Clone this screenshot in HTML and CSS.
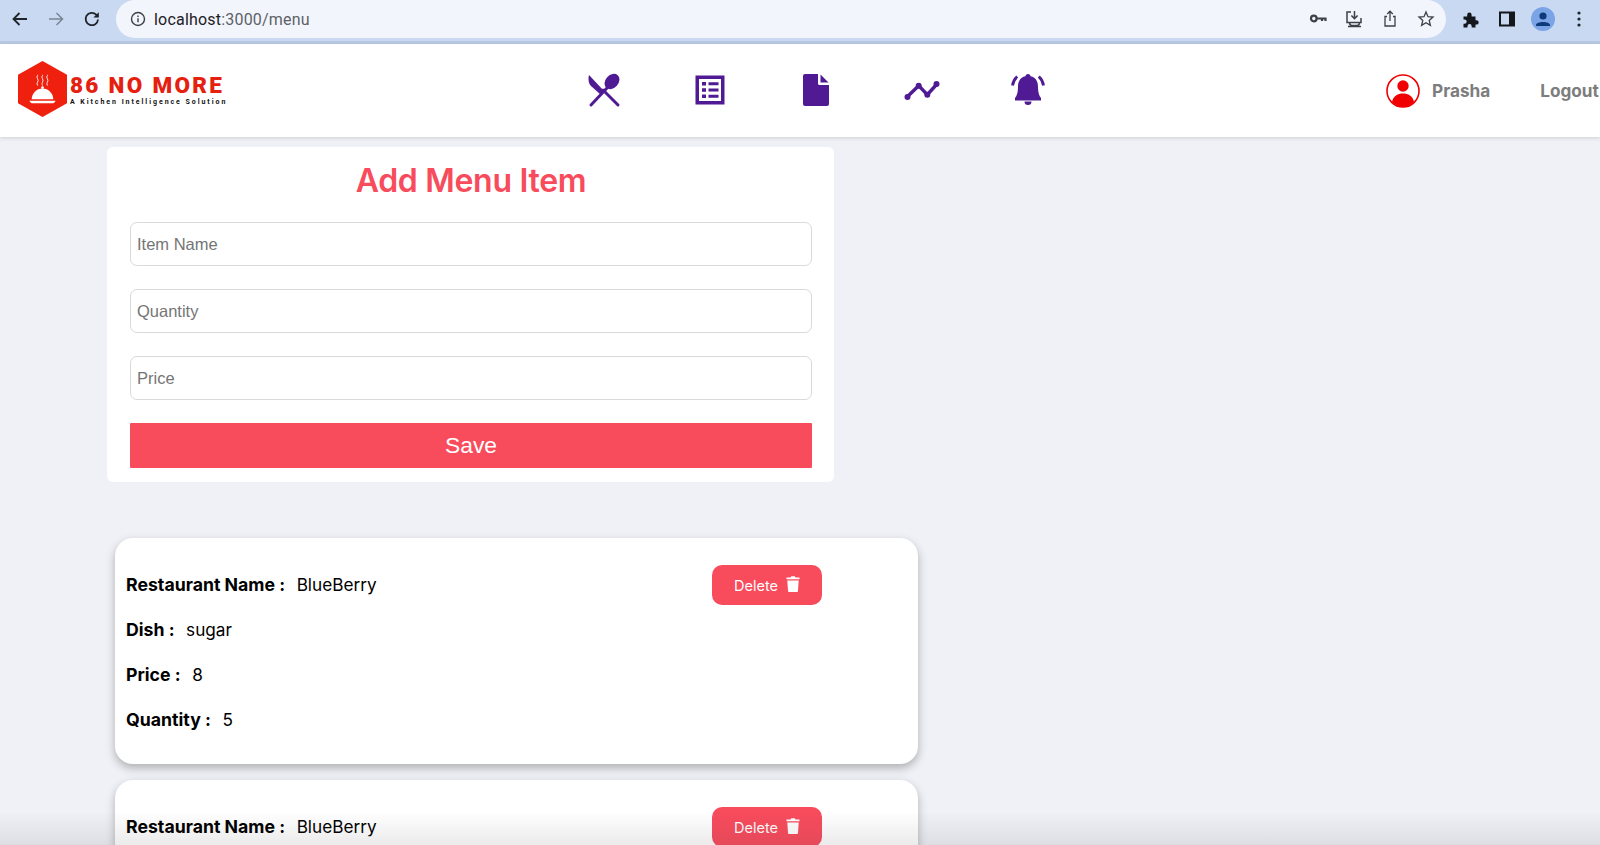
FILE: index.html
```html
<!DOCTYPE html>
<html lang="en">
<head>
<meta charset="utf-8">
<title>86 No More - Menu</title>
<link rel="stylesheet" href="styles.css">
</head>
<body>
<div class="browser">
  <div class="nav-btns">
    <svg class="i20" viewBox="0 0 20 20"><path d="M17 10H4M9.500 4 3.500 10l6 6" class="s-dark"/></svg>
    <svg class="i20" viewBox="0 0 20 20"><path d="M3 10h13M10.500 4l6 6-6 6" class="s-grey"/></svg>
    <svg class="i20" viewBox="0 0 20 20"><path d="M16 10.500A6.200 6.200 0 1 1 14.200 5.600L16.200 7.600" class="s-dark"/><path d="M16.800 3.200v5.400h-5.400z" class="f-dark"/></svg>
  </div>
  <div class="urlbar">
    <svg class="i16" viewBox="0 0 16 16"><circle cx="8" cy="8" r="6.500" class="s-thin"/><path d="M8 7.200v4M8 4.600v1.400" class="s-thin"/></svg>
    <span class="url"><span class="url-host">localhost</span>:3000/menu</span>
    <div class="url-icons">
      <svg class="i18" viewBox="0 0 18 18"><circle cx="4.800" cy="8.500" r="2.800" class="s-key"/><path d="M7.500 8.500h9v2.500M13 8.500V11" class="s-key"/></svg>
      <svg class="i18" viewBox="0 0 18 18"><path d="M6 2H2v10.500h3M16 8v4.500h-3M9.500 1v7.500M6.400 5.500l3.100 3.200 3.100-3.200M4.500 12.500c0 2 1 3 2.500 3h5c1.500 0 2.500-1 2.500-3zM3 16.500h13" class="s-key2"/></svg>
      <svg class="i18" viewBox="0 0 18 18"><path d="M6 6.500H4v9.500h10V6.500h-2M9 11V1.500M6.200 4 9 1.200 11.800 4" class="s-thin2"/></svg>
      <svg class="i18" viewBox="0 0 18 18"><path d="M9 2l2 4.700 5 .4-3.800 3.300 1.200 5L9 12.700 4.600 15.400l1.200-5L2 7.100l5-.4z" class="s-thin2"/></svg>
    </div>
  </div>
  <div class="chrome-icons">
    <svg class="i18" viewBox="0 0 18 18"><path d="M1.500 6.500h3.700V4.800a2.200 2.200 0 0 1 4.400 0v1.700h3.900v3.700h1a2.200 2.200 0 0 1 0 4.400h-1v2.900H9.700v-1.300a2.100 2.100 0 0 0-4.200 0v1.300H1.500v-3.700h1a2.200 2.200 0 0 0 0-4.400h-1z" class="f-black"/></svg>
    <svg class="i18" viewBox="0 0 18 18"><path d="M1 1.500h16v15H1zM3 3.500v11h8v-11z" class="f-black" fill-rule="evenodd"/></svg>
    <svg class="avatar-small" viewBox="0 0 24 24"><circle cx="12" cy="12" r="12" fill="#7ba4e6"/><circle cx="12" cy="9" r="3.600" fill="#0d3a78"/><path d="M5 18c0-4 14-4 14 0v1H5z" fill="#0d3a78"/></svg>
    <svg class="dots" viewBox="0 0 4 16"><circle cx="2" cy="2" r="1.600"/><circle cx="2" cy="8" r="1.600"/><circle cx="2" cy="14" r="1.600"/></svg>
  </div>
</div>

<header class="topbar">
  <div class="logo">
    <svg class="hex" viewBox="0 0 50 57">
      <path d="M25 0 50 14v29L25 57 0 43V14z" fill="#f0200f"/>
      <path d="M20 25c-2-3 2-4 0-7s1-3 0-4M25 25c-2-3 2-4 0-7s1-3 0-4M30 25c-2-3 2-4 0-7s1-3 0-4" class="steam"/>
      <path d="M14 39a11 11 0 0 1 22 0z" fill="#fff"/>
      <circle cx="25" cy="27" r="1.400" fill="#fff"/>
      <path d="M12 40.500h26v1l-2 1.500H14l-2-1.500z" fill="#fff"/>
    </svg>
    <div class="logo-text">
      <div class="logo-title">86 NO MORE</div>
      <div class="logo-sub">A Kitchen Intelligence Solution</div>
    </div>
  </div>
  <nav class="iconnav">
    <svg class="navicon" viewBox="0 0 36 36"><path d="M3 3 18 19l-3.500 3.500L5 14C2.500 11.500 2 7 3 3z" class="f-purple"/><path d="M5 33 21 16" class="s-purple"/><path d="M32 33 17 18" class="s-purple"/><ellipse cx="26" cy="9.500" rx="6.500" ry="8.500" transform="rotate(42 26 9.500)" class="f-purple"/></svg>
    <svg class="navicon" viewBox="0 0 36 36"><path d="M3.500 3.500h29v29h-29zM7 7v22h22V7z" class="f-purple" fill-rule="evenodd"/><path d="M10 10h4v3.500h-4zM16.500 10.300h10v3h-10zM10 16.200h4v3.500h-4zM16.500 16.500h10v3h-10zM10 22.500h4V26h-4zM16.500 22.800h10v3h-10z" class="f-purple"/></svg>
    <svg class="navicon" viewBox="0 0 36 36"><path d="M7 2h13v9.500a1.500 1.500 0 0 0 1.500 1.500H31v19a2 2 0 0 1-2 2H7a2 2 0 0 1-2-2V4a2 2 0 0 1 2-2zM22.500 2.500 30.500 10.500h-8z" class="f-purple"/></svg>
    <svg class="navicon" viewBox="0 0 36 36"><path d="M3 25 14.700 13.700 23.300 22.700 33 12" class="s-purple3"/><circle cx="3.500" cy="25" r="3" class="f-purple"/><circle cx="14.700" cy="13.700" r="3" class="f-purple"/><circle cx="23.300" cy="22.700" r="3" class="f-purple"/><circle cx="32.500" cy="12" r="3" class="f-purple"/></svg>
    <svg class="navicon" viewBox="0 0 36 36"><path d="M18 2c1.500 0 2.500 1 2.600 2.300 5.600 1.200 7.400 5.600 7.400 10.700 0 5.500 1.200 9 3 11v2.500H5V26c1.800-2 3-5.500 3-11 0-5.100 1.800-9.500 7.400-10.700C15.500 3 16.500 2 18 2zM14.500 29.500h7a3.500 3.500 0 0 1-7 0z" class="f-purple"/><path d="M2.500 13.500c.5-3.500 2-6.500 4.700-9M33.500 13.500c-.5-3.500-2-6.500-4.700-9" class="s-bell"/></svg>
  </nav>
  <div class="user">
    <svg class="usericon" viewBox="0 0 34 34"><circle cx="17" cy="17" r="16" fill="#fff" stroke="#f00000" stroke-width="1.600"/><circle cx="17" cy="12" r="5.700" fill="#f00000"/><path d="M6 28c1-6 6-8.500 11-8.500S27 22 28 28c-3 3-7 5-11 5s-8-2-11-5z" fill="#f00000"/></svg>
    <span class="username">Prasha</span>
    <span class="logout">Logout</span>
  </div>
</header>

<main class="content">
  <section class="form-card">
    <h1 class="form-title">Add Menu Item</h1>
    <input class="field" placeholder="Item Name">
    <input class="field" placeholder="Quantity">
    <input class="field" placeholder="Price">
    <button class="save">Save</button>
  </section>

  <section class="item-card">
    <div class="item-rows">
      <p class="row"><b>Restaurant Name :</b><span>BlueBerry</span></p>
      <p class="row"><b>Dish :</b><span>sugar</span></p>
      <p class="row"><b>Price :</b><span>8</span></p>
      <p class="row"><b>Quantity :</b><span>5</span></p>
    </div>
    <button class="delete">Delete
      <svg class="trash" viewBox="0 0 14 16"><path d="M4.500 1.500 5.200.3h3.600l.7 1.200H13.500v1.700H.5V1.500zM1.300 4.400h11.400l-.7 10.300c0 .7-.6 1.300-1.300 1.300H3.300c-.7 0-1.300-.6-1.300-1.300z" fill="#fff"/></svg>
    </button>
  </section>

  <section class="item-card">
    <div class="item-rows">
      <p class="row"><b>Restaurant Name :</b><span>BlueBerry</span></p>
    </div>
    <button class="delete">Delete
      <svg class="trash" viewBox="0 0 14 16"><path d="M4.500 1.500 5.200.3h3.600l.7 1.200H13.500v1.700H.5V1.500zM1.300 4.400h11.400l-.7 10.300c0 .7-.6 1.300-1.300 1.300H3.300c-.7 0-1.300-.6-1.300-1.300z" fill="#fff"/></svg>
    </button>
  </section>
</main>
<div class="bottom-fade"></div>
</body>
</html>
```
FILE: styles.css
```css
* { box-sizing: border-box; }
html, body { height: 845px; overflow: hidden; }
body { margin: 0; background: #f0f1f6; font-family: Inter, "Liberation Sans", sans-serif; color: #000; position: relative; }

.browser { height: 44px; background: #c9d9f2; border-bottom: 3px solid #b9c9e4; display: flex; align-items: flex-start; padding-left: 10px; }
.nav-btns { display: flex; gap: 16px; width: 106px; padding-top: 9px; flex: none; }
.i20 { width: 20px; height: 20px; fill: none; }
.i16 { width: 16px; height: 16px; fill: none; flex: none; }
.i18 { width: 18px; height: 18px; fill: none; flex: none; }
.s-dark { stroke: #20242b; stroke-width: 1.800; fill: none; }
.s-grey { stroke: #7a8594; stroke-width: 1.500; fill: none; }
.f-dark { fill: #20242b; }
.f-black { fill: #14171c; }
.s-thin { stroke: #3c4148; stroke-width: 1.400; fill: none; }
.s-thin2 { stroke: #3c4148; stroke-width: 1.300; fill: none; }
.s-key { stroke: #3c4148; stroke-width: 2.200; fill: none; }
.s-key2 { stroke: #3c4148; stroke-width: 1.500; fill: none; }
.urlbar { width: 1330px; height: 38px; background: #f2f6fc; border-radius: 0 19px 19px 19px; border-top-left-radius: 19px; display: flex; align-items: center; padding: 0 11px 0 14px; flex: none; }
.url { margin-left: 8px; font-size: 16px; color: #5d6167; font-family: Roboto, "Liberation Sans", sans-serif; letter-spacing: .2px; }
.url-host { color: #1d2025; }
.url-icons { margin-left: auto; display: flex; gap: 18px; }
.chrome-icons { display: flex; align-items: center; height: 38px; padding-left: 16px; gap: 18px; }
.avatar-small { width: 24px; height: 24px; margin: 0 -3px; }
.dots { width: 4px; height: 16px; fill: #20242b; margin-left: 7px; }

.topbar { height: 93px; background: #fff; box-shadow: 0 1px 4px rgba(0,0,0,.14); display: flex; align-items: center; position: relative; padding-left: 18px; }
.logo { display: flex; align-items: center; width: 543px; flex: none; padding-bottom: 3px; }
.hex { width: 49px; height: 56px; flex: none; }
.steam { stroke: #fff; stroke-width: .9; fill: none; }
.logo-text { margin-left: 3px; width: 160px; margin-top: 0; }
.logo-title { color: #e5200f; font-family: Roboto, sans-serif; font-weight: 900; font-size: 22.500px; line-height: 26px; letter-spacing: 2.300px; white-space: nowrap; }
.logo-sub { color: #111; font-family: Roboto, sans-serif; font-weight: 700; font-size: 7px; line-height: 9px; letter-spacing: 1.950px; white-space: nowrap; }
.iconnav { display: flex; gap: 70px; margin-left: 25px; padding-bottom: 2px; }
.navicon { width: 36px; height: 36px; }
.f-purple { fill: #4f1a94; }
.s-purple { stroke: #4f1a94; stroke-width: 3; stroke-linecap: round; fill: none; }
.s-purple3 { stroke: #4f1a94; stroke-width: 3.400; fill: none; }
.s-bell { stroke: #4f1a94; stroke-width: 2.800; fill: none; }
.user { margin-left: auto; display: flex; align-items: center; width: 217px; flex: none; padding-left: 3px; overflow: hidden; }
.usericon { width: 34px; height: 34px; flex: none; }
.username, .logout { color: #7d7d7d; font-weight: 700; font-size: 17.200px; white-space: nowrap; }
.username { margin-left: 12px; }
.logout { margin-left: 50px; }

.content { padding: 10px 0 0 107px; width: 930px; }
.form-card { width: 727px; height: 335px; background: #fff; border-radius: 6px; padding: 12px 22px 0 23px; display: flex; flex-direction: column; }
.form-title { margin: 0 0 19px; text-align: center; color: #f84b5c; font-size: 32px; line-height: 44px; font-weight: 600; letter-spacing: -.3px; }
.field { height: 44px; width: 100%; border: 1px solid #d9d9d9; border-radius: 7px; padding: 0 6px; margin-bottom: 23px; font-family: "Liberation Sans", sans-serif; font-size: 16.500px; background: #fff; outline: none; flex: none; }
.field::placeholder { color: #757575; opacity: 1; }
.save { height: 45px; width: 100%; border: none; border-radius: 1px; background: #f84b5c; color: #fff; font-family: "Liberation Sans", sans-serif; font-size: 22.800px; flex: none; padding: 0; }

.item-card { margin: 16px 0 0 8px; width: 803px; height: 226px; background: #fff; border-radius: 18px; box-shadow: 0 4px 10px rgba(0,0,0,.28); display: flex; align-items: flex-start; padding: 0 0 0 11px; overflow: visible; }
.form-card + .item-card { margin-top: 56px; }
.item-rows { width: 586px; flex: none; padding-top: 34px; }
.row { margin: 0 0 19px; font-size: 17.200px; line-height: 26px; display: flex; gap: 11.500px; height: 26px; white-space: nowrap; }
.row b { font-weight: 700; font-size: 17.700px; }
.delete { width: 110px; height: 40px; margin-top: 27px; background: #f84b5c; border: none; border-radius: 10px; color: #fff; font-family: Inter, sans-serif; font-size: 14.500px; display: flex; align-items: center; justify-content: center; gap: 8px; padding: 0; }
.trash { width: 14px; height: 16px; margin-top: -3px; }

.bottom-fade { position: absolute; left: 0; right: 0; bottom: 0; height: 34px; background: linear-gradient(to bottom, rgba(60,60,70,0), rgba(60,60,70,.1)); pointer-events: none; }
```
